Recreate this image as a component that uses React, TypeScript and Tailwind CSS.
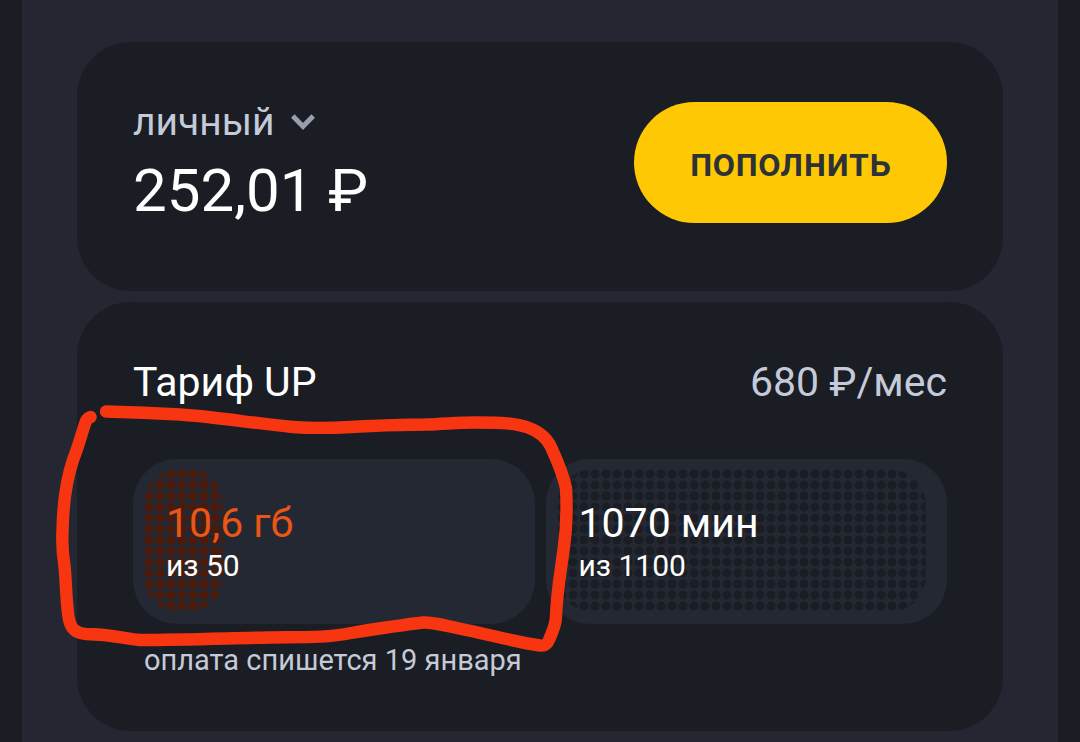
import React from 'react';

type Usage = {
  id: string;
  left: number;
  total: number;
  label: string;
  low: boolean;
};

const usages: Usage[] = [
  { id: 'data', left: 10.6, total: 50, label: '10,6 гб', low: true },
  { id: 'minutes', left: 1070, total: 1100, label: '1070 мин', low: false },
];

const App: React.FC = () => {
  return (
    <div className="min-h-screen bg-[#1a1d24] px-[22px] font-['Roboto','Noto_Sans',sans-serif]">
      <main className="min-h-screen bg-[#242731] px-[55px] pt-[42px] pb-[11px] flex flex-col gap-[11px]">
        {/* Balance */}
        <section className="flex items-center justify-between rounded-[54px] bg-[#1a1d24] px-14 pt-14 pb-16">
          <div className="flex flex-col items-start gap-[9px]">
            <button type="button" className="flex items-center gap-4 text-[39px] leading-[48px] text-[#c5cad9]">
              личный
              <Chevron />
            </button>
            <p className="text-[60px] leading-[72px] text-white">252,01 ₽</p>
          </div>
          <button
            type="button"
            className="h-[121px] rounded-full bg-[#ffc805] px-14 text-[40px] leading-[48px] font-medium text-[#2c3236]"
          >
            пополнить
          </button>
        </section>

        {/* Tariff */}
        <section className="rounded-[54px] bg-[#1a1d24] px-14 pt-14 pb-[53px]">
          <div className="flex items-center justify-between text-[41px] leading-[48px]">
            <h2 className="text-white">Тариф UP</h2>
            <p className="text-[#c5cad9]">680 ₽/мес</p>
          </div>
          <div className="mt-[53px] grid grid-cols-2 gap-[11px]">
            {usages.map(usage => (
              <UsageTile key={usage.id} usage={usage} />
            ))}
          </div>
          <p className="mt-[18px] pl-[11px] text-[29px] leading-[36px] text-[#c5cad9]">
            оплата спишется 19 января
          </p>
        </section>
      </main>
    </div>
  );
};

const Chevron: React.FC = () => (
  <svg className="h-4 w-6" viewBox="0 0 24 16" fill="none" aria-hidden="true">
    <path d="M1.8 2 L12 12.4 L22.2 2" stroke="#989eac" strokeWidth="5" />
  </svg>
);

// Dotted fill behind the numbers shows how much of the package is left
const UsageTile: React.FC<{ usage: Usage }> = ({ usage }) => {
  const percent = (usage.left / usage.total) * 100;
  const dots = usage.low
    ? 'bg-[radial-gradient(circle_at_5px_5px,#4d1a09_4px,transparent_5px)]'
    : 'bg-[radial-gradient(circle_at_5px_5px,#1a1d24_4px,transparent_5px)]';

  return (
    <div className="relative rounded-[44px] bg-[#242832] px-[33px] pt-[42px] pb-[38px]">
      <div className="absolute inset-x-[11px] top-[10px] bottom-[12px]">
        <div className={`h-full rounded-[36px] bg-[size:11px_11px] ${dots}`} style={{ width: `${percent}%` }} />
      </div>
      <div className="relative">
        <p className={`text-[41px] leading-[45px] ${usage.low ? 'text-[#eb5515]' : 'text-white'}`}>{usage.label}</p>
        <p className="text-[30px] leading-[40px] text-white">из {usage.total}</p>
      </div>
      {usage.low && <Marker />}
    </div>
  );
};

// Hand-drawn outline around the tile
const Marker: React.FC = () => (
  <svg
    className="pointer-events-none absolute -top-14 -left-20 z-10 h-64 w-[528px] max-w-none"
    viewBox="52 403 528 256"
    fill="none"
    aria-hidden="true"
  >
    <path
      d="M105 411.500 C130 412 155 413 179 414.500 C216 417 250 423 292 427 C312 428.500 332 428 350 427 C375 426 390 424.500 424 424.500 C445 424 455 422.500 475 422.500 C500 422.500 515 423 527 427.500 C539 432 546 438 550 447 C556 460 562 474 565 488 C566 505 565.500 530 562.500 550 C560 570 556 590 555 616 C555 625 552 630 548 640 C546 645 544 646 539 645.500 C515 642 490 635 465 630 C445 626 433 622 422 622.500 C400 625 375 629 350 633 C325 638 300 637 267 637.500 C220 638.500 180 640 139 640 C120 638 112 634.500 85 634 C72 633 69 626 67.500 617 C65 600 65 580 63.500 566 C61 550 61 540 61.500 532 C62 500 66 478 72 460 C78 445 81 432 85 421 C86 419 87 418 89.500 417"
      stroke="#f73611"
      strokeWidth="12.4"
      strokeLinecap="round"
      strokeLinejoin="round"
    />
  </svg>
);

export default App;
